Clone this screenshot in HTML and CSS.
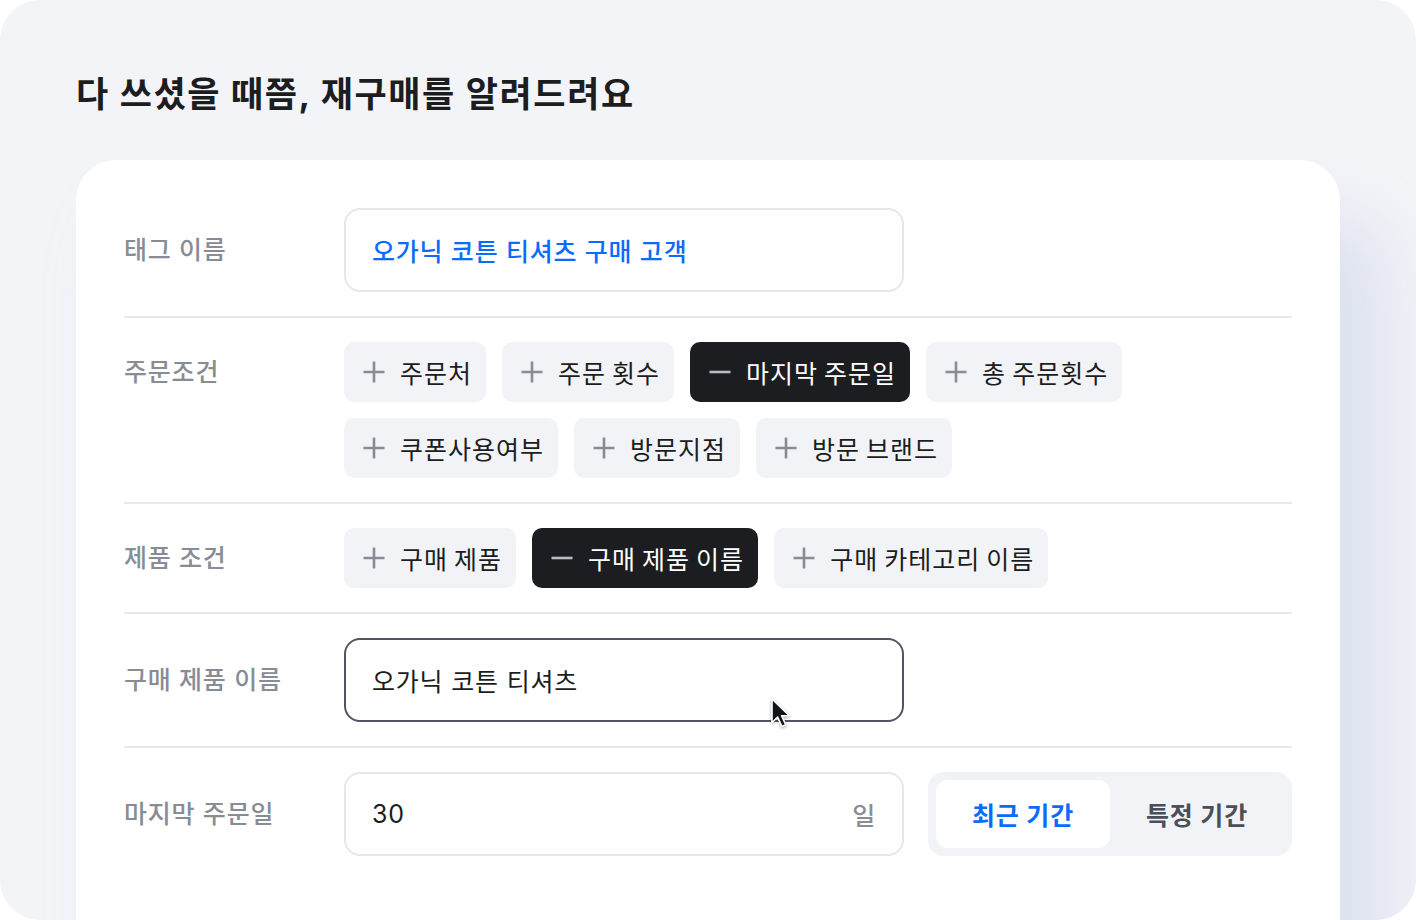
FILE: index.html
```html
<!DOCTYPE html>
<html lang="ko">
<head>
<meta charset="utf-8">
<title>재구매 알림</title>
<link rel="stylesheet" href="styles.css">
</head>
<body>
<div class="frame">
  <h1 class="title">다 쓰셨을 때쯤, 재구매를 알려드려요</h1>
  <section class="card">
    <div class="row row--center">
      <div class="label">태그 이름</div>
      <div class="field field--tag">오가닉 코튼 티셔츠 구매 고객</div>
    </div>

    <div class="row">
      <div class="label label--chip">주문조건</div>
      <div class="chips">
        <span class="chip"><svg class="ico" viewBox="0 0 24 24"><path d="M12 1.5v21M1.5 12h21"/></svg>주문처</span>
        <span class="chip"><svg class="ico" viewBox="0 0 24 24"><path d="M12 1.5v21M1.5 12h21"/></svg>주문 횟수</span>
        <span class="chip chip--on"><svg class="ico" viewBox="0 0 24 24"><path d="M1.5 12h21"/></svg>마지막 주문일</span>
        <span class="chip"><svg class="ico" viewBox="0 0 24 24"><path d="M12 1.5v21M1.5 12h21"/></svg>총 주문횟수</span>
        <span class="chip"><svg class="ico" viewBox="0 0 24 24"><path d="M12 1.5v21M1.5 12h21"/></svg>쿠폰사용여부</span>
        <span class="chip"><svg class="ico" viewBox="0 0 24 24"><path d="M12 1.5v21M1.5 12h21"/></svg>방문지점</span>
        <span class="chip"><svg class="ico" viewBox="0 0 24 24"><path d="M12 1.5v21M1.5 12h21"/></svg>방문 브랜드</span>
      </div>
    </div>

    <div class="row">
      <div class="label label--chip">제품 조건</div>
      <div class="chips">
        <span class="chip"><svg class="ico" viewBox="0 0 24 24"><path d="M12 1.5v21M1.5 12h21"/></svg>구매 제품</span>
        <span class="chip chip--on"><svg class="ico" viewBox="0 0 24 24"><path d="M1.5 12h21"/></svg>구매 제품 이름</span>
        <span class="chip"><svg class="ico" viewBox="0 0 24 24"><path d="M12 1.5v21M1.5 12h21"/></svg>구매 카테고리 이름</span>
      </div>
    </div>

    <div class="row row--center">
      <div class="label">구매 제품 이름</div>
      <div class="field field--focus">오가닉 코튼 티셔츠
        <svg class="cursor" viewBox="0 0 22 32"><path d="M2 2v23.5l5.6-5.4 4.2 9.3 3.9-1.7-4.1-9h7.8z"/></svg>
      </div>
    </div>

    <div class="row row--center row--last">
      <div class="label">마지막 주문일</div>
      <div class="inline">
        <div class="field field--num"><span>30</span><span class="unit">일</span></div>
        <div class="seg">
          <span class="seg-opt seg-opt--on">최근 기간</span>
          <span class="seg-opt">특정 기간</span>
        </div>
      </div>
    </div>
  </section>
</div>
</body>
</html>
```

FILE: styles.css
```css
* { box-sizing: border-box; }

html, body {
  margin: 0;
  background: #ffffff;
}

body {
  font-family: "Inter", "Noto Sans CJK KR", "Noto Sans", sans-serif;
  color: #1b1d21;
}

.frame {
  width: 1416px;
  height: 920px;
  border-radius: 40px;
  background: #f3f4f8;
  overflow: hidden;
  padding: 69px 76px 0 76px;
}

.title {
  margin: 0;
  font-size: 35px;
  line-height: 50px;
  font-weight: 700;
  color: #1b1d21;
  letter-spacing: 1.6px;
}

.card {
  margin-top: 41px;
  width: 1264px;
  background: #ffffff;
  border-radius: 40px;
  padding: 48px 48px 120px 48px;
  box-shadow: 44px 60px 70px rgba(176, 188, 222, 0.34);
}

.row {
  display: grid;
  grid-template-columns: 220px 1fr;
  align-items: start;
  padding: 24px 0;
  border-bottom: 2px solid #e6e8ec;
}

.row:first-child { padding-top: 0; }
.row--center { align-items: center; }
.row--last { border-bottom: none; }

.label {
  font-size: 25px;
  font-weight: 500;
  color: #878c95;
  line-height: 34px;
  letter-spacing: 0.8px;
}

.label--chip {
  line-height: 60px;
}

.field {
  position: relative;
  width: 560px;
  height: 84px;
  border: 2px solid #e4e7eb;
  border-radius: 16px;
  padding: 0 26px;
  display: flex;
  align-items: center;
  font-size: 25px;
  letter-spacing: 0.8px;
  color: #1b1d21;
}

.field--tag {
  color: #0a6cff;
  font-weight: 500;
}

.field--focus {
  border-color: #505763;
}

.field--num {
  justify-content: space-between;
}

.unit {
  color: #878c95;
  font-weight: 500;
}

.cursor {
  position: absolute;
  left: 424px;
  top: 57px;
  width: 22px;
  height: 32px;
  filter: drop-shadow(0 1px 1.5px rgba(0, 0, 0, 0.35));
}

.cursor path {
  fill: #111315;
  stroke: #ffffff;
  stroke-width: 1.6;
  stroke-linejoin: round;
}

.chips {
  display: flex;
  flex-wrap: wrap;
  gap: 16px;
}

.chip {
  display: inline-flex;
  align-items: center;
  height: 60px;
  padding: 0 14px 0 18px;
  border-radius: 10px;
  background: #f2f3f6;
  font-size: 25px;
  letter-spacing: 1px;
  word-spacing: -2px;
  color: #1b1d21;
  white-space: nowrap;
}

.ico {
  width: 24px;
  height: 24px;
  margin-right: 14px;
  flex: none;
}

.ico path {
  fill: none;
  stroke: #868b94;
  stroke-width: 2.6;
}

.chip--on {
  background: #1b1d21;
  color: #ffffff;
}

.chip--on .ico path {
  stroke: #b9bdc4;
}

.inline {
  display: flex;
  gap: 24px;
}

.seg {
  width: 364px;
  height: 84px;
  border-radius: 16px;
  background: #f2f3f6;
  padding: 8px;
  display: grid;
  grid-template-columns: 1fr 1fr;
}

.seg-opt {
  display: flex;
  align-items: center;
  justify-content: center;
  border-radius: 12px;
  font-size: 25px;
  font-weight: 700;
  letter-spacing: 0.8px;
  color: #4a4f58;
}

.seg-opt--on {
  background: #ffffff;
  color: #0a6cff;
}
```
